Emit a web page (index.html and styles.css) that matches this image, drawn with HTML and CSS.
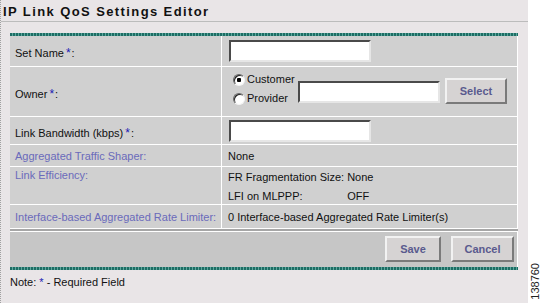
FILE: index.html
```html
<!doctype html>
<html>
    <head>
        <meta charset="utf-8">
        <title>IP Link QoS Settings Editor</title>
        <link rel="stylesheet" href="styles.css">
    </head>
    <body>
        <div class="page">
            <div class="main">
                <h1 class="title">IP Link QoS Settings Editor</h1>
                <div class="panel">
                    <div class="teal"></div>
                    <div class="form">
                        <div class="lbl req-row">Set Name<sup class="req">*</sup>:</div>
                        <div class="val"><input class="text" type="text"></div>

                        <div class="lbl req-row">Owner<sup class="req">*</sup>:</div>
                        <div class="val owner">
                            <div class="radios">
                                <label><input type="radio" name="owner" checked> Customer</label>
                                <label><input type="radio" name="owner"> Provider</label>
                            </div>
                            <input class="text" type="text">
                            <button class="btn btn-select">Select</button>
                        </div>

                        <div class="lbl req-row">Link Bandwidth (kbps)<sup class="req">*</sup>:</div>
                        <div class="val"><input class="text" type="text"></div>

                        <div class="lbl link">Aggregated Traffic Shaper:</div>
                        <div class="val">None</div>

                        <div class="lbl link top">Link Efficiency:</div>
                        <div class="val eff">
                            <span>FR Fragmentation Size:</span><span>None</span>
                            <span>LFI on MLPPP:</span><span>OFF</span>
                        </div>

                        <div class="lbl link">Interface-based Aggregated Rate Limiter:</div>
                        <div class="val">0 Interface-based Aggregated Rate Limiter(s)</div>
                    </div>
                    <div class="sep"></div>
                    <div class="actions">
                        <button class="btn btn-save">Save</button>
                        <button class="btn btn-cancel">Cancel</button>
                    </div>
                    <div class="teal"></div>
                </div>
                <p class="note">Note: <span class="req">*</span> - Required Field</p>
            </div>
            <div class="strip"><span class="fig">138760</span></div>
        </div>
    </body>
</html>
```

FILE: styles.css
```css
body {
    margin: 0;
    background: #fff;
    font-family: "Liberation Sans", Arial, sans-serif;
    font-size: 11px;
    color: #111;
}
.page {
    display: flex;
    height: 303px;
}
.main {
    width: 527px;
    background: #e9e5e7;
    border-left: 1px dotted #a0a0a0;
}
.strip {
    width: 13px;
    display: flex;
    align-items: flex-end;
    justify-content: center;
    padding-bottom: 3px;
}
.fig {
    writing-mode: vertical-rl;
    transform: rotate(180deg);
    font-size: 11px;
    color: #222;
}
.title {
    margin: 0;
    padding: 4px 0 0 2px;
    height: 17px;
    font-size: 13px;
    font-weight: bold;
    letter-spacing: 1.4px;
    line-height: 15px;
    border-bottom: 1px solid #bcbcbc;
}
.panel {
    margin: 11px 0 0 9px;
    width: 508px;
}
.teal {
    height: 3px;
    background: repeating-linear-gradient(90deg, #1d6d64 0 2px, #5ca79d 2px 3px);
}
.form {
    display: grid;
    grid-template-columns: 211px 1fr;
    grid-template-rows: 30px 49px 27px 21px 37px 23px;
    gap: 1px;
    background: #fff;
    border-right: 1px solid #fff;
}
.lbl, .val {
    background: #d0d0d0;
    display: flex;
    align-items: center;
    white-space: nowrap;
}
.lbl { padding-left: 5px; }
.val { padding-left: 6px; }
.req-row { padding-top: 4px; }
.link { color: #6a6abb; }
.top { align-items: flex-start; padding-top: 2px; }
.req {
    color: #1a1ab4;
    font-size: 12px;
    line-height: 0;
}
sup.req { vertical-align: 5px; margin: 0 1px 0 2px; }
.text {
    box-sizing: border-box;
    width: 142px;
    height: 22px;
    margin: 0 0 0 1px;
    padding: 0 2px;
    background: #fff;
    border: 2px solid;
    border-color: #4a4a4a #e6e6e6 #e6e6e6 #4a4a4a;
    font: inherit;
}
.owner { padding-left: 11px; }
.radios {
    display: flex;
    flex-direction: column;
    gap: 6px;
    width: 65px;
    margin-top: -5px;
}
.radios label {
    display: flex;
    align-items: center;
    gap: 2px;
    line-height: 13px;
}
.radios input {
    appearance: none;
    box-sizing: border-box;
    width: 12px;
    height: 12px;
    margin: 0;
    border-radius: 50%;
    background: #fff;
    border: 1px solid;
    border-color: #666 #f4f4f4 #f4f4f4 #666;
    box-shadow: inset 1px 1px 0 #222;
}
.radios input:checked {
    background: radial-gradient(circle, #000 0 2px, #fff 2.5px);
}
.owner .text { margin-left: 0; }
.btn {
    box-sizing: border-box;
    height: 26px;
    padding: 0;
    background: #d6d3d3;
    border: 2px solid;
    border-color: #f2f2f2 #7a7a7a #7a7a7a #f2f2f2;
    font-family: "Liberation Sans", Arial, sans-serif;
    font-size: 11px;
    font-weight: bold;
    color: #5a5a8e;
}
.btn-select { width: 62px; margin-left: 5px; margin-top: -2px; }
.eff {
    display: grid;
    grid-template-columns: max-content auto;
    column-gap: 3px;
    row-gap: 6px;
    align-content: start;
    align-items: start;
    justify-content: start;
    padding-top: 4px;
    line-height: 13px;
}
.sep {
    height: 2px;
    background: #a6a6a6;
    border-top: 1px solid #fff;
    border-bottom: 1px solid #fff;
}
.actions {
    display: flex;
    justify-content: flex-end;
    align-items: flex-start;
    gap: 10px;
    height: 35px;
    box-sizing: border-box;
    padding: 4px 3px 0 0;
    background: #c6c6c6;
    border-right: 1px solid #fff;
}
.btn-save { width: 56px; }
.btn-cancel { width: 63px; }
.note {
    margin: 5px 0 0 9px;
    line-height: 14px;
}
.note .req { font-size: 11px; line-height: 14px; }
```
